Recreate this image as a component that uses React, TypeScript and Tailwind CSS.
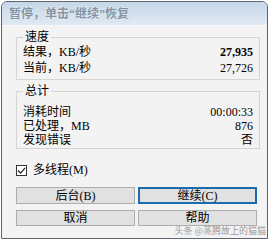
import React from 'react';

const font = { fontFamily: '"Liberation Serif", "Noto Sans CJK SC", serif' };

const Row = ({ label, value, bold }: { label: string; value: string; bold?: boolean }) => (
    <div className="flex justify-between items-center h-[14px] pl-[6px] pr-[6px]">
        <span>{label}</span>
        <span className={bold ? 'font-bold' : ''}>{value}</span>
    </div>
);

export default function App() {
    return (
        <div className="w-[274px] h-[243px] bg-white pt-[1px] pl-[1px] text-[12px] text-black" style={font}>
            <div className="relative w-[267px] h-[238px] border border-[#5b6670] rounded-t-[6px] overflow-hidden flex flex-col bg-[#f3f3f3]">
                {/* title bar */}
                <div className="h-[23px] shrink-0 bg-gradient-to-b from-[#c7d7e8] to-[#dfe9f3] flex items-center pl-[7px] text-[12px] font-bold text-[#8393a3] [text-shadow:0_0_2px_#ffffff]">
                    暂停，单击“继续”恢复
                </div>

                <div className="flex-1 pl-[14px] pr-[7px] pt-[4px] bg-[#f3f3f3] border-t border-[#f7f9fb]">
                    {/* speed group */}
                    <fieldset className="border border-[#d5d5d5] pb-[4px] pt-[1px]">
                        <legend className="ml-[6px] px-[2px] leading-[14px]">速度</legend>
                        <div className="flex flex-col gap-[2px]">
                            <Row label="结果，KB/秒" value="27,935" bold />
                            <Row label="当前，KB/秒" value="27,726" />
                        </div>
                    </fieldset>

                    {/* totals group */}
                    <fieldset className="border border-[#d5d5d5] mt-[4px] pb-[1px] pt-[7px]">
                        <legend className="ml-[6px] px-[2px] leading-[14px]">总计</legend>
                        <Row label="消耗时间" value="00:00:33" />
                        <Row label="已处理，MB" value="876" />
                        <Row label="发现错误" value="否" />
                    </fieldset>

                    {/* multithread */}
                    <div className="flex items-center gap-[6px] mt-[14px] h-[14px]">
                        <div className="w-[11px] h-[11px] border border-[#333] bg-white flex items-center justify-center">
                            <svg viewBox="0 0 10 10" className="w-[9px] h-[9px]">
                                <path d="M1 5 L4 8 L9 2" fill="none" stroke="#222" strokeWidth="1.3" />
                            </svg>
                        </div>
                        <span>多线程(M)</span>
                    </div>

                    {/* buttons */}
                    <div className="grid grid-cols-2 gap-x-[3px] gap-y-[6px] mt-[10px] w-[241px]">
                        <button className="h-[17px] bg-[#e1e1e1] border border-[#adadad] leading-none">后台(B)</button>
                        <button className="h-[17px] bg-[#e1e1e1] border-2 border-[#1c6ab0] leading-none">继续(C)</button>
                        <button className="h-[16px] bg-[#e1e1e1] border border-[#adadad] leading-none">取消</button>
                        <button className="h-[16px] bg-[#e1e1e1] border border-[#adadad] leading-none">帮助</button>
                    </div>
                </div>

                {/* watermark */}
                <span className="absolute right-[1px] bottom-[3px] text-[9px] text-[#9c9c9c] leading-none" style={{ fontFamily: '"Noto Sans CJK SC", sans-serif' }}>
                    头条 @蒸腾故上的猫猫
                </span>
            </div>
        </div>
    );
}
